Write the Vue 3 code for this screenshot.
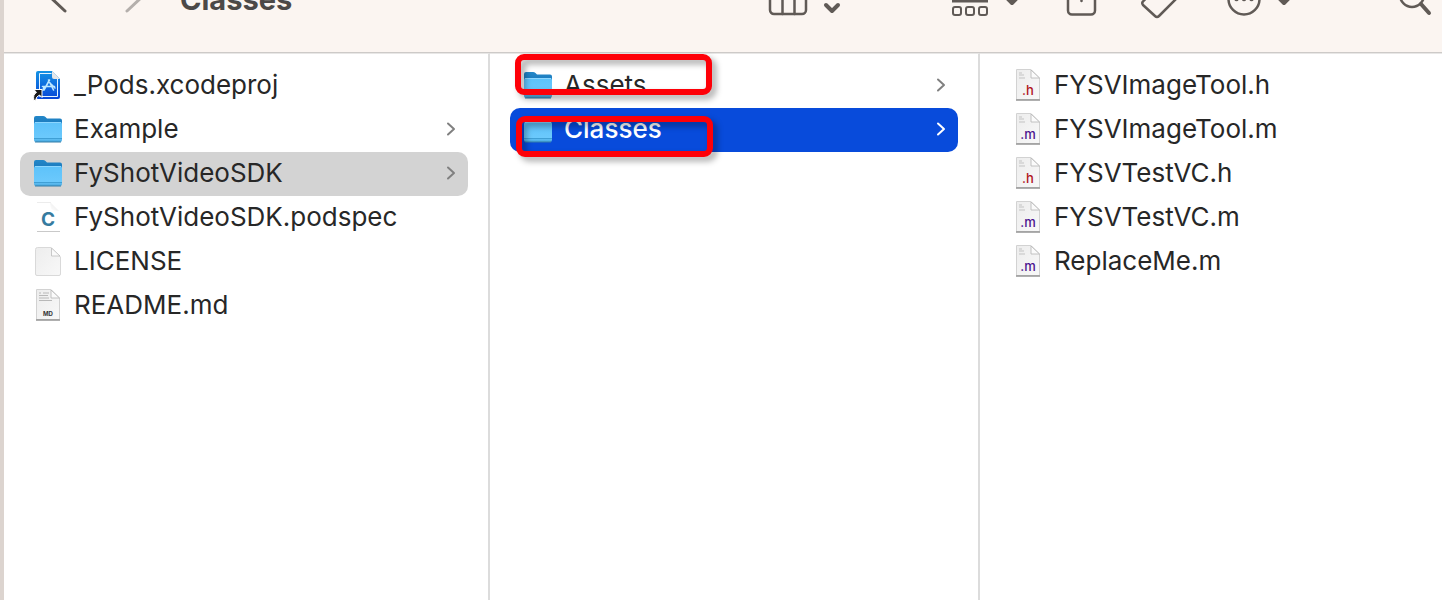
<script setup>
const columns = [
  {
    label: 'Project',
    marks: [],
    items: [
      { name: '_Pods.xcodeproj', kind: 'xcode' },
      { name: 'Example', kind: 'folder' },
      { name: 'FyShotVideoSDK', kind: 'folder', state: 'path' },
      { name: 'FyShotVideoSDK.podspec', kind: 'podspec' },
      { name: 'LICENSE', kind: 'plain' },
      { name: 'README.md', kind: 'md' },
    ],
  },
  {
    label: 'FyShotVideoSDK',
    marks: ['first', 'second'],
    items: [
      { name: 'Assets', kind: 'folder' },
      { name: 'Classes', kind: 'folder', state: 'active' },
    ],
  },
  {
    label: 'Classes',
    marks: [],
    items: [
      { name: 'FYSVImageTool.h', kind: 'h' },
      { name: 'FYSVImageTool.m', kind: 'm' },
      { name: 'FYSVTestVC.h', kind: 'h' },
      { name: 'FYSVTestVC.m', kind: 'm' },
      { name: 'ReplaceMe.m', kind: 'm' },
    ],
  },
]
</script>

<template>
  <div class="window">
    <svg class="defs" width="0" height="0" aria-hidden="true">
      <defs>
        <linearGradient id="front" x1="0" y1="0" x2="0" y2="1">
          <stop offset="0" stop-color="#5dc2fa" /><stop offset=".78" stop-color="#6bc9fc" /><stop offset="1" stop-color="#45a6dd" />
        </linearGradient>
        <linearGradient id="back" x1="0" y1="0" x2="0" y2="1">
          <stop offset="0" stop-color="#2387c9" /><stop offset="1" stop-color="#1570b3" />
        </linearGradient>
        <linearGradient id="blue" x1="0" y1="0" x2="0" y2="1">
          <stop offset="0" stop-color="#1593e4" /><stop offset="1" stop-color="#0645d8" />
        </linearGradient>
        <linearGradient id="paper" x1="0" y1="0" x2="1" y2="1">
          <stop offset="0" stop-color="#ededed" /><stop offset="1" stop-color="#f8f8f8" />
        </linearGradient>
        <linearGradient id="fold" x1="0" y1="1" x2="1" y2="0">
          <stop offset="0" stop-color="#ffffff" /><stop offset=".5" stop-color="#f2f2f2" /><stop offset="1" stop-color="#c8c8c8" />
        </linearGradient>
      </defs>
    </svg>

    <header class="toolbar">
      <div class="place">
        <button class="tool" aria-label="Back">
          <svg width="24" height="40" viewBox="0 -20 24 40"><path d="M19 -20 L3 -4 L19 11" /></svg>
        </button>
        <button class="tool forward" aria-label="Forward" disabled>
          <svg width="24" height="40" viewBox="0 -20 24 40"><path d="M5 -20 L21 -4 L5 11" /></svg>
        </button>
        <h1>Classes</h1>
      </div>
      <div class="tools">
        <button class="tool view" aria-label="View">
          <svg width="76" height="40" viewBox="0 -20 76 40">
            <rect x="4" y="-14" width="36" height="28" rx="4" /><path d="M16.500 -14V14M28.500 -14V14" />
            <path class="thick" d="M60 5L66 11L72 5" />
          </svg>
        </button>
        <button class="tool group" aria-label="Group">
          <svg width="76" height="40" viewBox="0 -20 76 40">
            <g class="tiles">
              <rect x="5" y="-14" width="8" height="8" rx="2" /><rect x="18" y="-14" width="8" height="8" rx="2" /><rect x="31" y="-14" width="8" height="8" rx="2" />
              <rect x="5" y="7" width="8" height="8" rx="2" /><rect x="18" y="7" width="8" height="8" rx="2" /><rect x="31" y="7" width="8" height="8" rx="2" />
            </g>
            <path class="bar" d="M4 1.300H40" />
            <path class="thick" d="M58 -3L64 3L70 -3" />
          </svg>
        </button>
        <button class="tool share" aria-label="Share">
          <svg width="40" height="40" viewBox="0 -20 40 40">
            <path d="M13 -9H10a4 4 0 0 0-4 4V10.500a4 4 0 0 0 4 4H29a4 4 0 0 0 4-4V-5a4 4 0 0 0-4-4H26M19.500 -19V1" />
          </svg>
        </button>
        <button class="tool tags" aria-label="Tags">
          <svg width="40" height="40" viewBox="0 -20 40 40">
            <path d="M3 1.500Q1.500 3 3 5L15 16Q17 18 19 16L37 -2V-18H22Z" />
          </svg>
        </button>
        <button class="tool" aria-label="More">
          <svg width="76" height="40" viewBox="0 -20 76 40">
            <circle cx="20" cy="-1" r="15.500" />
            <g class="dots"><circle cx="12.500" cy="-1" r="2.200" /><circle cx="20" cy="-1" r="2.200" /><circle cx="27.500" cy="-1" r="2.200" /></g>
            <path class="thick" d="M54 -3L60 3L66 -3" />
          </svg>
        </button>
        <button class="tool search" aria-label="Search">
          <svg width="36" height="40" viewBox="0 -20 36 40">
            <circle cx="14" cy="-5" r="12" /><path class="handle" d="M23 4L31 13" />
          </svg>
        </button>
      </div>
    </header>

    <main class="browser">
      <section v-for="column in columns" :key="column.label" class="column" :aria-label="column.label">
        <ul>
          <li v-for="item in column.items" :key="item.name">
            <button class="row" :class="item.state">
              <svg class="icon" width="30" height="36" viewBox="0 0 30 36" aria-hidden="true">
                <g v-if="item.kind === 'folder'">
                  <path d="M1 7Q1 5 3 5H10Q11.500 5 12.500 6L14 7.500H27Q29 7.500 29 9.500V20H1Z" fill="url(#back)" />
                  <path d="M1 13Q1 11 3 11H27Q29 11 29 13V29Q29 31 27 31H3Q1 31 1 29Z" fill="url(#front)" />
                  <path d="M2 11.500H28" stroke="#8cd6ff" />
                  <path d="M1 27.500H29" stroke="#3f9fd5" />
                  <path d="M2 31H28" stroke="#357fa9" />
                </g>
                <g v-else-if="item.kind === 'xcode'">
                  <path d="M5 4H19L27 12V30Q27 32 25 32H5Q3 32 3 30V6Q3 4 5 4Z" fill="url(#blue)" />
                  <path d="M18.500 6.500H6.500V29.500H24.500V12" fill="none" stroke="#e5f4ff" />
                  <path d="M19 4L27 12H21Q19 12 19 10Z" fill="#e4e6e8" />
                  <path d="M15.500 13L20.500 23M16.500 13L11 23M9.500 19.500H21.500M11 20L10 23M18 17L22 21" fill="none" stroke="#bce7ff" stroke-width="1.600" stroke-linecap="round" />
                  <path d="M1 33.500Q-.5 27.500 3.500 25.500L1 22.500H9V30.500L6.500 28Q3 29.500 2.500 33.500Z" fill="#181818" stroke="#fff" stroke-width="1" />
                </g>
                <g v-else-if="item.kind === 'podspec'">
                  <path d="M4 3.500H18" stroke="#ececec" />
                  <path d="M17 3L26 12Q21 12 18 10Z" fill="url(#fold)" />
                  <path d="M4 32.500H27" stroke="#c9c9c9" />
                  <text x="15" y="27" class="c">C</text>
                </g>
                <g v-else-if="item.kind === 'plain'">
                  <path d="M4.500 4.500H18L27.500 14V31Q27.500 32.500 26 32.500H4Q2.500 32.500 2.500 31V6.500Q2.500 4.500 4.500 4.500Z" fill="url(#paper)" stroke="#d9d9d9" />
                  <path d="M18.500 5V13H27Z" fill="#fafafa" stroke="#bdbdbd" stroke-width=".8" />
                </g>
                <g v-else>
                  <path d="M3.500 2.500H18L26.500 11V32.500H3.500Z" fill="url(#paper)" stroke="#d2d2d2" />
                  <path d="M3 33H27" stroke="#959595" stroke-width="1.500" />
                  <path d="M18 3V11H26.500Z" fill="#fbfbfb" stroke="#b5b5b5" stroke-width=".8" />
                  <path v-if="item.kind === 'md'" d="M6 6H8M10 6H16M6 8.500H15M6 11H16M6 13.500H19" stroke="#b8b8b8" />
                  <path v-else d="M6 6H9M6 8H11M6 11H12" stroke="#c3c3c3" />
                  <text v-if="item.kind === 'md'" x="15" y="29" class="md">MD</text>
                  <text v-else x="15" y="28" :class="item.kind">.{{ item.kind }}</text>
                </g>
              </svg>
              <span class="name">{{ item.name }}</span>
              <svg v-if="item.kind === 'folder'" class="arrow" width="10" height="14" viewBox="0 0 10 14" aria-hidden="true">
                <path d="M2 1.500L8 7L2 12.500" />
              </svg>
            </button>
          </li>
        </ul>
        <span v-for="mark in column.marks" :key="mark" class="mark" :class="mark"></span>
      </section>
    </main>
  </div>
</template>

<style>
body {
  margin: 0;
}
</style>

<style scoped>
.window {
  display: flex;
  flex-direction: column;
  box-sizing: border-box;
  min-height: 100vh;
  overflow: hidden;
  border-left: 4px solid #dcd4cf;
  background: #fff;
  color: #272727;
  font-family: Inter, "Liberation Sans", sans-serif;
}
.defs {
  position: absolute;
}
.toolbar {
  display: flex;
  align-items: center;
  justify-content: space-between;
  height: 104px;
  margin-top: -52px;
  border-bottom: 1px solid #cdcac8;
  background: #fbf5f1;
}
.place,
.tools {
  display: flex;
  align-items: center;
}
.place {
  padding-left: 42px;
}
.tool {
  display: block;
  padding: 0;
  border: 0;
  background: none;
  color: #605a56;
}
.tool svg {
  display: block;
  fill: none;
  stroke: currentColor;
  stroke-width: 3;
  stroke-linecap: round;
  stroke-linejoin: round;
}
.tool .thick {
  stroke-width: 4;
}
.tool .tiles {
  stroke-width: 2;
}
.tool .bar {
  stroke-linecap: butt;
}
.tool .handle {
  stroke-width: 4;
}
.tool .dots {
  fill: currentColor;
  stroke: none;
}
.place .forward {
  margin-left: 52px;
  color: #b4afac;
}
h1 {
  margin: 0 0 0 34px;
  color: #4c4947;
  font-size: 29px;
  font-weight: 700;
  line-height: 36px;
}
.tools {
  padding-right: 8px;
}
.tools svg {
  stroke-width: 2.5;
}
.view {
  margin-right: 106px;
}
.group,
.share {
  margin-right: 38px;
}
.tags {
  margin-right: 44px;
}
.search {
  margin-left: 98px;
}
.browser {
  display: grid;
  flex: 1;
  grid-template-columns: 486px 490px 1fr;
}
.column {
  position: relative;
  padding: 10px 20px;
  border-top: 1px solid #e8e7e6;
  border-right: 2px solid #dcdcdc;
}
.column:first-child {
  padding-left: 16px;
}
.column:last-child {
  border-right: 0;
}
ul {
  margin: 0;
  padding: 0;
  list-style: none;
}
.row {
  display: flex;
  align-items: center;
  box-sizing: border-box;
  width: 100%;
  height: 44px;
  padding: 0 12px 2px 13px;
  border: 0;
  border-radius: 10px;
  background: none;
  color: inherit;
  font-family: inherit;
  font-size: 26px;
  line-height: 32px;
  text-align: left;
}
.icon {
  flex: none;
}
.name {
  flex: 1;
  margin-left: 11px;
  white-space: nowrap;
}
.arrow {
  fill: none;
  stroke: #808080;
  stroke-width: 2;
  stroke-linecap: round;
  stroke-linejoin: round;
}
.path {
  background: #d3d3d3;
}
.active {
  background: #084bdb;
  color: #fff;
  font-weight: 500;
}
.active .arrow {
  stroke: #fff;
}
.icon text {
  font-family: Inter, sans-serif;
  text-anchor: middle;
}
.icon .c {
  fill: #357b9f;
  font-size: 19px;
  font-weight: 700;
}
.icon .md {
  fill: #333;
  font-size: 6px;
  font-weight: 700;
}
.icon .h {
  fill: #b0141c;
  font-size: 13px;
  font-weight: 500;
}
.icon .m {
  fill: #4b128f;
  font-size: 13px;
  font-weight: 500;
}
.mark {
  position: absolute;
  box-sizing: border-box;
  width: 197px;
  height: 41px;
  border: 6px solid #fe0008;
  border-radius: 9px;
  filter: drop-shadow(4px 4px 3px rgba(0, 0, 0, 0.35));
  pointer-events: none;
}
.first {
  top: 0;
  left: 25px;
}
.second {
  top: 62px;
  left: 26px;
}
</style>
